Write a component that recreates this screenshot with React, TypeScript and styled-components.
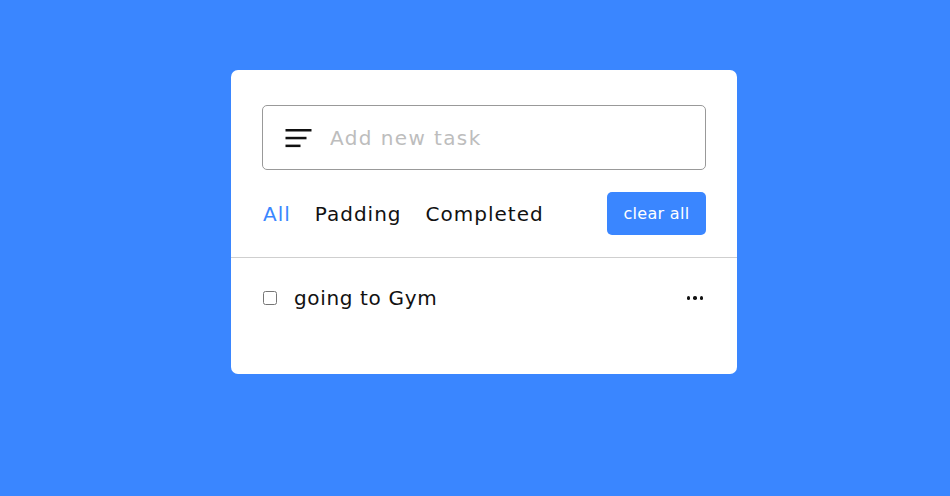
import React from "react";
import styled, { createGlobalStyle } from "styled-components";

const Global = createGlobalStyle`
  html, body { margin: 0; padding: 0; background: #3a86ff; }
  body { font-family: "DejaVu Sans", "Open Sans", sans-serif; }
  * { box-sizing: border-box; }
`;

const Page = styled.div`
  width: 950px;
  height: 496px;
  display: flex;
  justify-content: flex-start;
  align-items: flex-start;
  padding: 70px 0 0 231px;
`;

const Card = styled.div`
  width: 506px;
  height: 304px;
  background: #fff;
  border-radius: 7px;
  display: flex;
  flex-direction: column;
`;

const Top = styled.div`
  padding: 35px 31px 22px;
  border-bottom: 1px solid #cfcfcf;
  display: flex;
  flex-direction: column;
  gap: 22px;
`;

const InputBox = styled.div`
  height: 65px;
  border: 1px solid #999;
  border-radius: 5px;
  display: flex;
  align-items: center;
  padding-left: 22px;
  gap: 16px;
`;

const Input = styled.input`
  border: none;
  outline: none;
  flex: 1;
  font-family: inherit;
  font-size: 20px;
  letter-spacing: 1.4px;
  color: #333;
  background: transparent;
  &::placeholder { color: #bdbdbd; }
`;

const Controls = styled.div`
  display: flex;
  align-items: center;
  justify-content: space-between;
  height: 43px;
`;

const Filters = styled.div`
  display: flex;
  gap: 24px;
  padding-left: 1px;
`;

const Filter = styled.span<{ $active?: boolean }>`
  font-size: 20px;
  letter-spacing: 1px;
  color: ${(p) => (p.$active ? "#3a86ff" : "#111")};
  cursor: pointer;
`;

const ClearButton = styled.button`
  width: 99px;
  height: 43px;
  border: none;
  border-radius: 5px;
  background: #3a86ff;
  color: #fff;
  font-family: inherit;
  font-size: 16px;
  letter-spacing: 0.3px;
  cursor: pointer;
`;

const List = styled.ul`
  list-style: none;
  margin: 0;
  padding: 27px 31px;
`;

const Task = styled.li`
  display: flex;
  align-items: center;
  height: 26px;
`;

const Check = styled.input`
  width: 14px;
  height: 14px;
  margin: 0 17px 0 1px;
`;

const TaskText = styled.span`
  flex: 1;
  font-size: 20px;
  letter-spacing: 0.65px;
  color: #111;
`;

const Dots = styled.span`
  display: flex;
  gap: 3px;
  padding-right: 3px;
  & > i {
    width: 3.5px;
    height: 3.5px;
    border-radius: 50%;
    background: #111;
  }
`;

function FilterIcon() {
  return (
    <svg width="27" height="20" viewBox="0 0 27 20">
      <rect x="0.5" y="1" width="26" height="2.5" fill="#111" />
      <rect x="0.5" y="8.8" width="21" height="2.5" fill="#111" />
      <rect x="0.5" y="16.6" width="15" height="2.5" fill="#111" />
    </svg>
  );
}

export default function App() {
  return (
    <>
      <Global />
      <Page>
        <Card>
          <Top>
            <InputBox>
              <FilterIcon />
              <Input placeholder="Add new task" />
            </InputBox>
            <Controls>
              <Filters>
                <Filter $active>All</Filter>
                <Filter>Padding</Filter>
                <Filter>Completed</Filter>
              </Filters>
              <ClearButton>clear all</ClearButton>
            </Controls>
          </Top>
          <List>
            <Task>
              <Check type="checkbox" />
              <TaskText>going to Gym</TaskText>
              <Dots>
                <i />
                <i />
                <i />
              </Dots>
            </Task>
          </List>
        </Card>
      </Page>
    </>
  );
}
